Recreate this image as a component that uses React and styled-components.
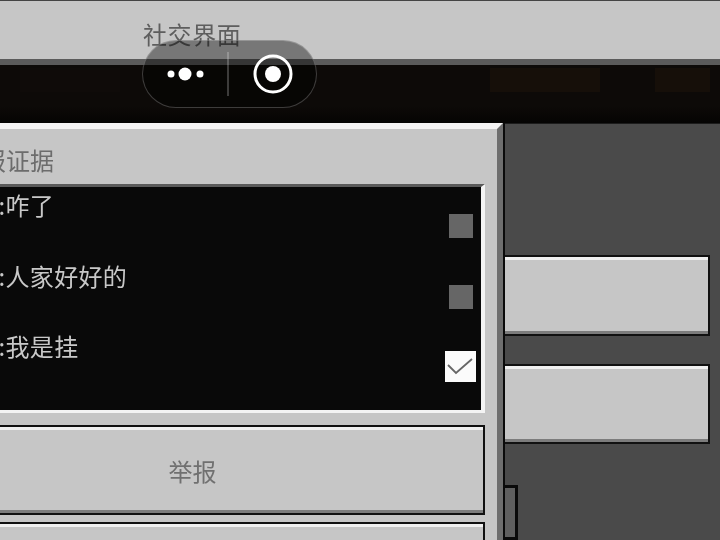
import React from 'react'
import styled, { createGlobalStyle, css } from 'styled-components'

const GlobalStyle = createGlobalStyle`
  html, body {
    margin: 0;
    padding: 0;
    background: #4a4a4a;
  }
  * {
    box-sizing: border-box;
  }
`

const Page = styled.div`
  position: relative;
  width: 720px;
  height: 540px;
  overflow: hidden;
  display: flex;
  flex-direction: column;
  font-family: "Noto Sans CJK SC", "Liberation Sans", sans-serif;
  filter: blur(0.5px);
`

const TopBar = styled.header`
  height: 65px;
  flex: none;
  padding: 17px 0 0 143px;
  background: #c6c6c6;
  border-top: 1px solid #444;
  border-bottom: 6px solid #5b5b5b;
  color: #5e5e5e;
  font-size: 24px;
  letter-spacing: 0.6px;
  line-height: 32px;
`

const Strip = styled.div`
  height: 58px;
  flex: none;
  background:
    linear-gradient(#160f09, #160f09) 490px 3px / 110px 24px no-repeat,
    linear-gradient(#160f09, #160f09) 655px 3px / 55px 24px no-repeat,
    linear-gradient(#0f0b09, #0f0b09) 20px 3px / 100px 24px no-repeat,
    linear-gradient(#0d0a08 70%, #050403);
`

const Body = styled.div`
  flex: 1;
  display: flex;
  min-height: 0;
`

const Dialog = styled.section`
  flex: none;
  width: 615px;
  margin-left: -112px;
  padding: 0 12px;
  background: #c6c6c6;
  border-top: 6px solid #f4f4f4;
  border-right: 6px solid #6e6e6e;
`

const DialogTitle = styled.h2`
  height: 55px;
  margin: 0;
  padding: 4px 0 0 58px;
  color: #6c6c6c;
  font-size: 24px;
  font-weight: 400;
  line-height: 54px;
`

const EvidenceList = styled.ul`
  height: 229px;
  margin: 0 0 12px;
  padding: 0;
  list-style: none;
  background: #090909;
  border-top: 3px solid #5a5a5a;
  border-right: 4px solid #f4f4f4;
  border-bottom: 3px solid #f4f4f4;
`

const EvidenceRow = styled.li`
  height: 70.5px;
  display: flex;
  justify-content: space-between;
  padding: 0 5px 0 50px;
  color: #c8c8c8;
  font-size: 24px;
  letter-spacing: 0.3px;
  line-height: 36px;
`

const CheckSlot = styled.div`
  width: 31px;
  display: flex;
  justify-content: center;
  margin-top: ${(p) => (p.$checked ? '23px' : '27px')};
`

const CheckBox = styled.div`
  ${(p) =>
    p.$checked
      ? css`
          width: 31px;
          height: 31px;
          background: #fbfbfb;
        `
      : css`
          width: 24px;
          height: 24px;
          background: #666;
        `}
`

const bevel = css`
  background: #c6c6c6;
  border: 2px solid #111;
  box-shadow:
    inset 0 3px 0 #f0f0f0,
    inset 0 -3px 0 #7c7c7c;
`

const ActionButton = styled.div`
  ${bevel}
  height: 90px;
  margin-bottom: 7px;
  display: flex;
  align-items: center;
  justify-content: center;
  color: #707070;
  font-size: 24px;
`

const SidePane = styled.aside`
  flex: 1;
  display: flex;
  flex-direction: column;
  padding: 132px 10px 0 0;
  background: #4a4a4a;
  border-left: 2px solid #0a0a0a;
  box-shadow: inset 0 1px 0 #1c1c1c;
`

const SideButton = styled.div`
  ${bevel}
  flex: none;
  height: ${(p) => p.$height}px;
  margin-bottom: ${(p) => p.$gap}px;
  border-left: 0;
`

const Tab = styled.div`
  flex: none;
  width: 13px;
  height: 55px;
  background: #5f5f5f;
  border: 3px solid #0a0a0a;
  border-left: 0;
`

const Capsule = styled.div`
  position: absolute;
  left: 142px;
  top: 40px;
  width: 175px;
  height: 68px;
  display: flex;
  align-items: center;
  background: rgba(0, 0, 0, 0.4);
  border: 1.5px solid rgba(255, 255, 255, 0.22);
  border-radius: 34px;
`

const CapsuleHalf = styled.div`
  height: 44px;
  display: flex;
  align-items: center;
  justify-content: center;
  width: ${(p) => p.$width}px;
`

const Divider = styled.div`
  width: 2px;
  height: 44px;
  background: rgba(255, 255, 255, 0.22);
`

const rows = [
  { text: '玩家:咋了', checked: false },
  { text: '玩家:人家好好的', checked: false },
  { text: '玩家:我是挂', checked: true },
]

const MoreIcon = () => (
  <svg width="40" height="16" viewBox="0 0 40 16">
    <circle cx="6" cy="8" r="3.5" fill="#fff" />
    <circle cx="20" cy="8" r="6.5" fill="#fff" />
    <circle cx="35" cy="8" r="3.5" fill="#fff" />
  </svg>
)

const CloseIcon = () => (
  <svg width="42" height="42" viewBox="0 0 42 42">
    <circle cx="22" cy="21" r="18" fill="none" stroke="#fff" strokeWidth="3" />
    <circle cx="22" cy="21" r="8" fill="#fff" />
  </svg>
)

const CheckMark = () => (
  <svg width="31" height="31" viewBox="0 0 31 31">
    <path d="M3 14 L11 22 L27 8" fill="none" stroke="#666" strokeWidth="1.8" />
  </svg>
)

const App = () => {
  return (
    <Page>
      <GlobalStyle />
      <TopBar>社交界面</TopBar>
      <Strip />
      <Body>
        <Dialog>
          <DialogTitle>举报证据</DialogTitle>
          <EvidenceList>
            {rows.map((row) => (
              <EvidenceRow key={row.text}>
                <span>{row.text}</span>
                <CheckSlot $checked={row.checked}>
                  <CheckBox $checked={row.checked}>
                    {row.checked && <CheckMark />}
                  </CheckBox>
                </CheckSlot>
              </EvidenceRow>
            ))}
          </EvidenceList>
          <ActionButton>举报</ActionButton>
          <ActionButton />
        </Dialog>
        <SidePane>
          <SideButton $height={81} $gap={28} />
          <SideButton $height={80} $gap={41} />
          <Tab />
        </SidePane>
      </Body>
      <Capsule>
        <CapsuleHalf $width={84}>
          <MoreIcon />
        </CapsuleHalf>
        <Divider />
        <CapsuleHalf $width={88}>
          <CloseIcon />
        </CapsuleHalf>
      </Capsule>
    </Page>
  )
}

export default App
